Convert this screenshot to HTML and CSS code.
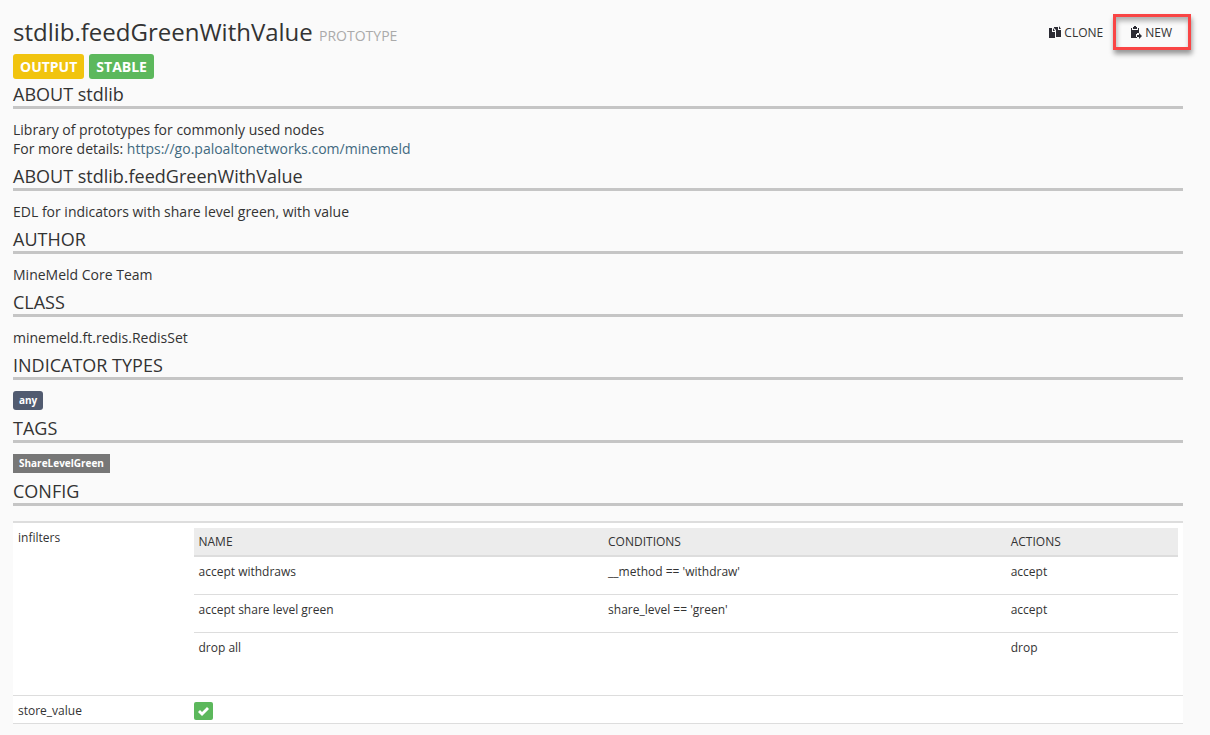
FILE: index.html
```html
<!DOCTYPE html>
<html lang="en">
<head>
	<meta charset="utf-8">
	<meta name="viewport" content="width=device-width, initial-scale=1">
	<title>stdlib.feedGreenWithValue</title>
	<link rel="stylesheet" href="styles.css">
</head>
<body>

<div class="header">
	<h3>stdlib.feedGreenWithValue <small>PROTOTYPE</small></h3>
	<div class="actions">
		<button type="button" class="action">
			<svg width="12" height="13" viewBox="0 0 12 13" aria-hidden="true">
				<path d="M0 2h3v4h3v6H0z M4 2l2 3H4z" />
				<path d="M5 1h4v3h3v7H7V4L5 2z M10 0l2 3h-2z" />
			</svg>
			CLONE
		</button>
		<button type="button" class="action highlight">
			<svg width="12" height="13" viewBox="0 0 12 13" aria-hidden="true">
				<path d="M1 2h1v2h6V2h1v5H7v1H6v3h1v1H1z" />
				<path d="M3 1h1V0h2v1h1v2H3z" />
				<path d="M7 9h2V7l3 3-3 3v-2H7z" />
			</svg>
			NEW
		</button>
	</div>
</div>

<div class="labels">
	<span class="label label-output">OUTPUT</span>
	<span class="label label-stable">STABLE</span>
</div>

<h4>ABOUT stdlib</h4>
<div class="section">
	Library of prototypes for commonly used nodes<br>
	For more details: <a href="https://go.paloaltonetworks.com/minemeld">https://go.paloaltonetworks.com/minemeld</a>
</div>

<h4>ABOUT stdlib.feedGreenWithValue</h4>
<div class="section">EDL for indicators with share level green, with value</div>

<h4>AUTHOR</h4>
<div class="section">MineMeld Core Team</div>

<h4>CLASS</h4>
<div class="section">minemeld.ft.redis.RedisSet</div>

<h4>INDICATOR TYPES</h4>
<div class="section"><span class="badge">any</span></div>

<h4>TAGS</h4>
<div class="section"><span class="badge badge-tag">ShareLevelGreen</span></div>

<h4>CONFIG</h4>
<table class="config">
	<tr>
		<td class="key">infilters</td>
		<td>
			<table class="filters">
				<thead>
					<tr>
						<th class="col-name">NAME</th>
						<th class="col-conditions">CONDITIONS</th>
						<th>ACTIONS</th>
					</tr>
				</thead>
				<tbody>
					<tr>
						<td>accept withdraws</td>
						<td>__method == 'withdraw'</td>
						<td>accept</td>
					</tr>
					<tr>
						<td>accept share level green</td>
						<td>share_level == 'green'</td>
						<td>accept</td>
					</tr>
					<tr>
						<td>drop all</td>
						<td></td>
						<td>drop</td>
					</tr>
				</tbody>
			</table>
		</td>
	</tr>
	<tr>
		<td class="key">store_value</td>
		<td class="flag">
			<span class="check" role="img" aria-label="true">
				<svg width="11" height="9" viewBox="0 0 11 9" aria-hidden="true">
					<path d="M0 5l2-2 2 2 5-5 2 2-7 7z" />
				</svg>
			</span>
		</td>
	</tr>
</table>

</body>
</html>
```

FILE: styles.css
```css
* {
	box-sizing: border-box;
}

body {
	margin: 0;
	padding: 14px 27px 11px 13px;
	font-family: "Open Sans", sans-serif;
	font-size: 14px;
	line-height: 19px;
	color: #333;
	background: #fafafa;
}

a {
	color: #41697f;
	text-decoration: none;
}

/* Title and buttons */
.header {
	display: flex;
	justify-content: space-between;
	align-items: center;
	margin-right: -8px;
}

h3 {
	margin: 0;
	font-size: 24px;
	font-weight: 400;
	line-height: 36px;
}

h3 small {
	font-size: 14px;
	line-height: 1;
	color: #aaa;
}

.actions {
	display: flex;
	gap: 10px;
}

.action {
	display: flex;
	align-items: center;
	gap: 3px;
	height: 36px;
	padding: 0;
	border: 0;
	font-family: inherit;
	font-size: 12px;
	color: #333;
	background: none;
	cursor: pointer;
}

.action svg {
	fill: #2b2b33;
}

.highlight {
	padding: 0 16px 0 14px;
	border: 3px solid #f94545;
	box-shadow: 1px 4px 5px rgba(0, 0, 0, 0.4), inset 1px 4px 5px rgba(0, 0, 0, 0.3);
}

/* Labels under the title */
.labels {
	display: flex;
	gap: 5px;
	margin: 4px 0 5px;
}

.label {
	padding: 0 7px;
	border-radius: 3px;
	font-weight: 700;
	line-height: 25px;
	color: #fff;
}

.label-output {
	background: #f1c40f;
}

.label-stable {
	background: #5cb85c;
}

/* Sections */
h4 {
	margin: 0;
	padding-bottom: 2px;
	border-bottom: 3px solid #c5c5c5;
	font-size: 18px;
	font-weight: 400;
	line-height: 20px;
}

.section {
	padding: 11px 0 8px;
}

.badge {
	display: block;
	width: fit-content;
	padding: 0 6px;
	border-radius: 3px;
	font-size: 10px;
	font-weight: 700;
	color: #fff;
	background: #515b70;
}

.badge-tag {
	border-radius: 0;
	background: #777;
}

/* Config */
table {
	width: 100%;
	table-layout: fixed;
	border-collapse: separate;
	border-spacing: 0;
	font-size: 12px;
	line-height: 17px;
	background: #fff;
}

th, td {
	padding: 5px;
	text-align: left;
	vertical-align: top;
}

.config {
	margin-top: 15px;
	border-top: 2px solid #ddd;
}

.config > tbody > tr > td {
	border-bottom: 1px solid #ddd;
}

.key {
	width: 15%;
	padding: 6px 5px 4px;
}

.flag {
	padding: 6px 5px 3px;
}

.filters {
	margin-bottom: 20px;
}

.filters th {
	border-bottom: 2px solid #ddd;
	font-weight: 400;
	background: #ececec;
}

.filters td {
	padding: 6px 5px 14px;
}

.filters tbody tr + tr td {
	border-top: 1px solid #ddd;
}

.col-name {
	width: 41.6%;
}

.col-conditions {
	width: 40.9%;
}

.check {
	display: flex;
	align-items: center;
	justify-content: center;
	width: 19px;
	height: 18px;
	border-radius: 2px;
	background: #5cb85c;
}

.check svg {
	fill: #fff;
}
```
